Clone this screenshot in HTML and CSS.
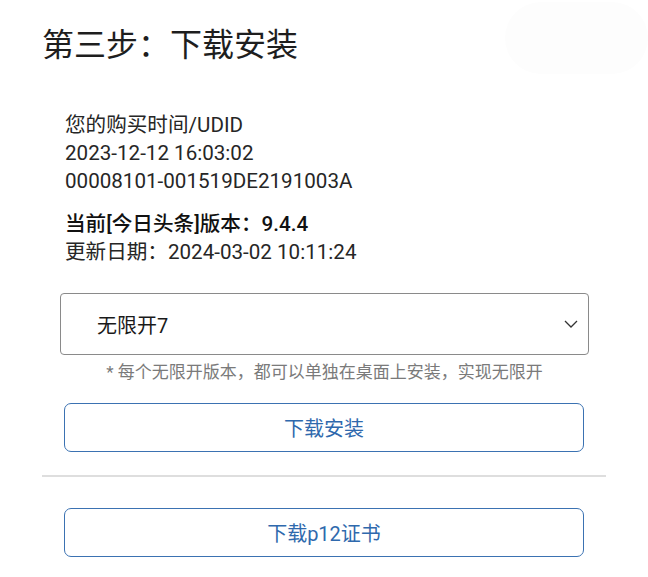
FILE: index.html
```html
<!DOCTYPE html>
<html lang="zh-CN">
<head>
  <meta charset="UTF-8" />
  <meta name="viewport" content="width=device-width, initial-scale=1.0"/>
  <title>第三步：下载安装</title>
  <link rel="stylesheet" href="styles.css">
</head>
<body>
  <div class="watermark"></div>

  <div class="page">
    <h1 class="step-title">第三步：下载安装</h1>

    <div class="info">
      <div class="info-group">
        <div>您的购买时间/UDID</div>
        <div>2023-12-12 16:03:02</div>
        <div>00008101-001519DE2191003A</div>
      </div>
      <div class="info-group">
        <div class="version">当前[今日头条]版本：<b>9.4.4</b></div>
        <div>更新日期：2024-03-02 10:11:24</div>
      </div>
    </div>

    <div class="picker">
      <div class="select">
        <span>无限开7</span>
        <svg class="chevron" width="14" height="8" viewBox="0 0 14 8">
          <path d="M1 1 L7 7 L13 1" fill="none" stroke="#333" stroke-width="1.3"/>
        </svg>
      </div>
      <div class="hint">* 每个无限开版本，都可以单独在桌面上安装，实现无限开</div>
    </div>

    <div class="btn">下载安装</div>

    <div class="divider"></div>

    <div class="btn">下载p12证书</div>
  </div>
</body>
</html>
```

FILE: styles.css
```css
html, body {
  margin: 0;
  padding: 0;
  background-color: #ffffff;
  font-family: Roboto, "Noto Sans CJK SC", sans-serif;
  color: #222222;
  overflow: hidden;
}

.page {
  padding: 0 42px;
}

.watermark {
  position: absolute;
  top: 2px;
  left: 505px;
  width: 143px;
  height: 72px;
  border-radius: 40px;
  background-color: #fdfdfd;
}

.step-title {
  margin: 0;
  padding-top: 20px;
  font-family: "Noto Sans CJK SC", sans-serif;
  font-size: 32px;
  font-weight: 400;
  line-height: 44px;
  color: #1e1e1e;
  position: relative;
}

.info {
  margin: 47px 0 0 23px;
  font-size: 20.6px;
  line-height: 28px;
  color: #262626;
}

.info-group + .info-group {
  margin-top: 15px;
}

.version {
  font-weight: 500;
  color: #111111;
}

.version b {
  font-weight: 500;
}

.picker {
  margin: 27px 17px 0 18px;
}

.select {
  height: 60px;
  border: 1px solid #8a8a8a;
  border-radius: 4px;
  display: flex;
  align-items: center;
  justify-content: space-between;
  padding: 0 8px 0 36px;
  font-size: 20px;
  color: #1a1a1a;
}

.chevron {
  margin-right: 2px;
}

.hint {
  margin-top: 5px;
  text-align: center;
  font-size: 17px;
  line-height: 24px;
  color: #7a7a7a;
}

.btn {
  margin: 19px 22px 0 22px;
  height: 47px;
  border: 1.5px solid #3b72b2;
  border-radius: 7px;
  display: flex;
  align-items: center;
  justify-content: center;
  font-size: 20px;
  color: #2f69ad;
}

.divider {
  margin-top: 23px;
  height: 2px;
  background-color: #dedede;
}

.divider + .btn {
  margin-top: 31px;
}
```
